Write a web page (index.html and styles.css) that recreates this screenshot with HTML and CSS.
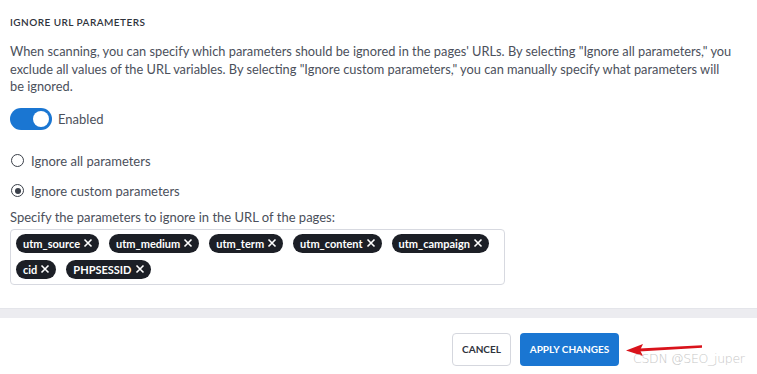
FILE: index.html
```html
<!DOCTYPE html>
<html lang="en">
<head>
    <meta charset="UTF-8">
    <meta name="viewport" content="width=device-width, initial-scale=1.0">
    <title>Ignore URL Parameters</title>
    <link rel="stylesheet" href="styles.css">
</head>
<body>
    <div class="settings">
        <h3 class="section-title">Ignore URL parameters</h3>
        <p class="description">When scanning, you can specify which parameters should be ignored in the pages' URLs. By selecting "Ignore all parameters," you exclude all values of the URL variables. By selecting "Ignore custom parameters," you can manually specify what parameters will be ignored.</p>

        <label class="toggle-row">
            <span class="toggle on"><span class="knob"></span></span>
            <span>Enabled</span>
        </label>

        <label class="radio-row">
            <span class="radio"></span>
            <span>Ignore all parameters</span>
        </label>
        <label class="radio-row">
            <span class="radio checked"></span>
            <span>Ignore custom parameters</span>
        </label>

        <div class="field-label">Specify the parameters to ignore in the URL of the pages:</div>
        <div class="tag-box">
            <span class="tag">utm_source <svg class="x" viewBox="0 0 10 10"><path d="M1.5 1.5 L8.5 8.5 M8.5 1.5 L1.5 8.5"/></svg></span>
            <span class="tag">utm_medium <svg class="x" viewBox="0 0 10 10"><path d="M1.5 1.5 L8.5 8.5 M8.5 1.5 L1.5 8.5"/></svg></span>
            <span class="tag">utm_term <svg class="x" viewBox="0 0 10 10"><path d="M1.5 1.5 L8.5 8.5 M8.5 1.5 L1.5 8.5"/></svg></span>
            <span class="tag">utm_content <svg class="x" viewBox="0 0 10 10"><path d="M1.5 1.5 L8.5 8.5 M8.5 1.5 L1.5 8.5"/></svg></span>
            <span class="tag">utm_campaign <svg class="x" viewBox="0 0 10 10"><path d="M1.5 1.5 L8.5 8.5 M8.5 1.5 L1.5 8.5"/></svg></span>
            <span class="tag">cid <svg class="x" viewBox="0 0 10 10"><path d="M1.5 1.5 L8.5 8.5 M8.5 1.5 L1.5 8.5"/></svg></span>
            <span class="tag">PHPSESSID <svg class="x" viewBox="0 0 10 10"><path d="M1.5 1.5 L8.5 8.5 M8.5 1.5 L1.5 8.5"/></svg></span>
        </div>
    </div>

    <div class="divider"></div>

    <div class="footer">
        <button class="btn cancel">Cancel</button>
        <button class="btn apply">Apply changes</button>
        <svg class="arrow" width="80" height="16" viewBox="0 0 80 16">
            <path d="M77 3.2 L14 6.6 L14 9.6 L77 5.8 Z" fill="#d9131b"/>
            <path d="M1 8.5 L18 2 L15 8.2 L18 14 Z" fill="#d9131b"/>
        </svg>
        <span class="watermark">CSDN @SEO_juper</span>
    </div>
</body>
</html>
```

FILE: styles.css
```css
* {
    margin: 0;
    padding: 0;
    box-sizing: border-box;
}

body {
    font-family: Lato, 'Noto Sans', sans-serif;
    background: #fff;
    color: #4b505b;
    font-size: 13px;
}

.settings {
    padding: 16px 10px 0 10px;
}

.section-title {
    font-size: 10px;
    font-weight: 600;
    color: #2f333c;
    text-transform: uppercase;
    letter-spacing: 0.45px;
    line-height: 12px;
}

.description {
    margin-top: 15px;
    font-size: 12.8px;
    line-height: 17.5px;
    width: 723px;
}

.toggle-row {
    display: flex;
    align-items: center;
    gap: 6px;
    margin-top: 12px;
    height: 22px;
}

.toggle {
    width: 42px;
    height: 22px;
    border-radius: 11px;
    background: #1a76d2;
    position: relative;
    display: inline-block;
}

.knob {
    position: absolute;
    right: 3px;
    top: 3px;
    width: 16px;
    height: 16px;
    border-radius: 50%;
    background: #fff;
}

.radio-row {
    display: flex;
    align-items: center;
    gap: 7px;
    height: 18px;
    margin-top: 12px;
}

.toggle-row + .radio-row {
    margin-top: 22px;
}

.radio {
    width: 13px;
    height: 13px;
    border: 1.5px solid #3a3f49;
    border-radius: 50%;
    display: inline-flex;
    align-items: center;
    justify-content: center;
    margin-left: 1px;
}

.radio.checked::after {
    content: "";
    width: 6px;
    height: 6px;
    border-radius: 50%;
    background: #3a3f49;
}

.field-label {
    margin-top: 9px;
    line-height: 16px;
}

.tag-box {
    margin-top: 4px;
    width: 495px;
    height: 56px;
    border: 1px solid #d7d9e0;
    border-radius: 4px;
    padding: 4px 5px;
    display: flex;
    flex-wrap: wrap;
    align-content: flex-start;
    gap: 7px 10px;
}

.tag {
    background: #1c1f26;
    color: #fff;
    font-size: 11px;
    font-weight: 700;
    height: 19px;
    border-radius: 10px;
    padding: 0 6px 0 7px;
    display: inline-flex;
    align-items: center;
    gap: 3px;
}

.tag .x {
    width: 10px;
    height: 10px;
    stroke: #fff;
    stroke-width: 1.6;
    fill: none;
}

.divider {
    margin-top: 23px;
    height: 10px;
    background: #ececf0;
    border-top: 1px solid #e4e5ea;
}

.footer {
    display: flex;
    align-items: center;
    padding: 15px 0 0 452px;
    position: relative;
}

.btn {
    font-family: Lato, 'Noto Sans', sans-serif;
    font-size: 10px;
    font-weight: 700;
    text-transform: uppercase;
    height: 33px;
    border-radius: 4px;
    cursor: pointer;
}

.btn.cancel {
    width: 59px;
    background: #fff;
    color: #2f333c;
    border: 1px solid #d5d7de;
}

.btn.apply {
    width: 99px;
    margin-left: 9px;
    background: #1a76d2;
    color: #fff;
    border: none;
}

.arrow {
    position: absolute;
    left: 625px;
    top: 24px;
}

.watermark {
    position: absolute;
    left: 633px;
    top: 33px;
    font-family: 'DejaVu Sans', sans-serif;
    font-weight: 300;
    font-size: 12.5px;
    line-height: 16px;
    letter-spacing: -0.3px;
    color: #c8c8c8;
    white-space: nowrap;
}
```
